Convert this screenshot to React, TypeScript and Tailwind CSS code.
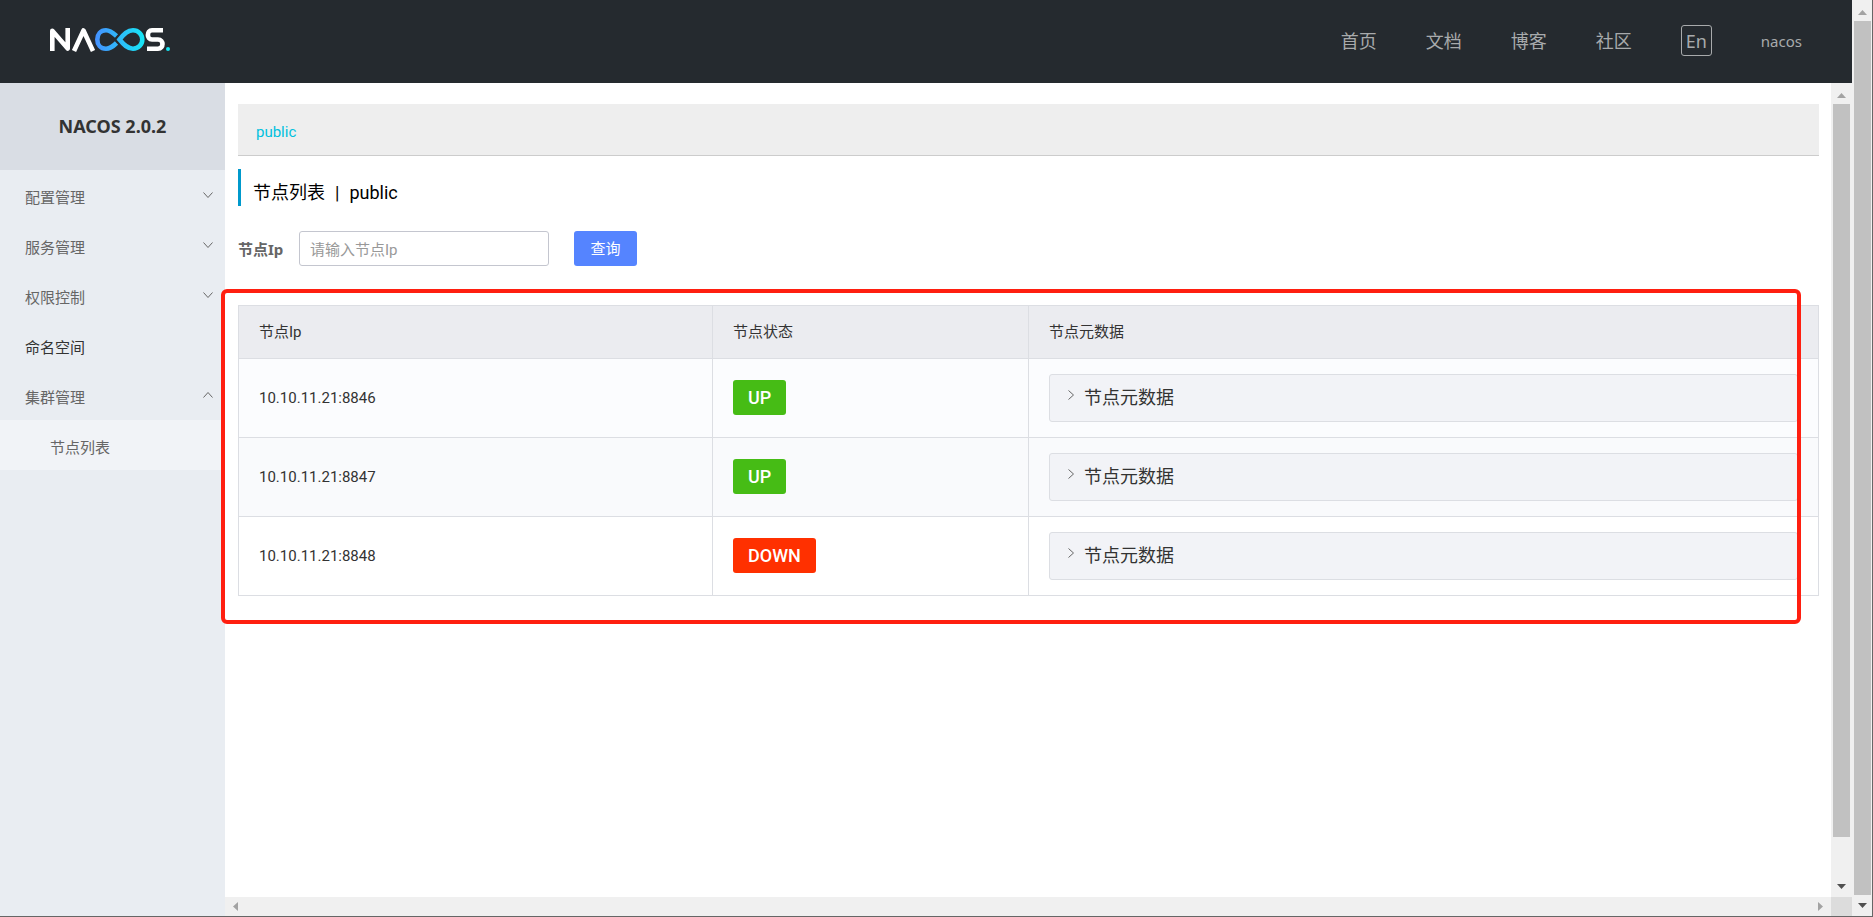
import React, { useState } from 'react';

type NodeState = 'UP' | 'DOWN';

interface ClusterNode {
  address: string;
  state: NodeState;
  rowClass: string;
}

const nodes: ClusterNode[] = [
  { address: '10.10.11.21:8846', state: 'UP', rowClass: 'bg-[#fbfcfe]' },
  { address: '10.10.11.21:8847', state: 'UP', rowClass: 'bg-[#f9fafc]' },
  { address: '10.10.11.21:8848', state: 'DOWN', rowClass: 'bg-white' },
];

const navLinks = ['首页', '文档', '博客', '社区'];

const menu = [
  { label: '配置管理', children: [] as string[], leaf: false },
  { label: '服务管理', children: [], leaf: false },
  { label: '权限控制', children: [], leaf: false },
  { label: '命名空间', children: [], leaf: true },
  { label: '集群管理', children: ['节点列表'], leaf: false },
];

function Logo() {
  return (
    <svg width="120" height="24" viewBox="0 0 120 24" fill="none" aria-label="NACOS">
      <defs>
        <linearGradient id="loop" gradientUnits="userSpaceOnUse" x1="45" y1="0" x2="94" y2="0">
          <stop offset="0" stopColor="#4590ff" />
          <stop offset="1" stopColor="#17e6f5" />
        </linearGradient>
      </defs>
      <g stroke="#fff" strokeWidth="4.6" strokeLinejoin="round">
        <path d="M2.300 23V2.800L17.700 20.500V0" />
        <path d="M24 23L33.500 2.500L43 23" />
        <path d="M113 2.300H102C96.500 2.300 96.500 11.500 102 11.500H108C114 11.500 114 20.700 108 20.700H97" />
      </g>
      <g stroke="url(#loop)" strokeWidth="4.6">
        <path d="M66.500 8C62 4 59.500 2.300 56 2.300C50.500 2.300 47.300 6.500 47.300 11.500C47.300 16.500 50.500 20.700 56 20.700C60 20.700 62.500 19 66.500 15" />
        <path d="M69.500 11.500C74 6 77.500 2.300 83 2.300C88.500 2.300 92.300 6.500 92.300 11.500C92.300 16.500 88.500 20.700 83 20.700C77.500 20.700 74 17 69.500 11.500Z" />
      </g>
      <circle cx="118" cy="21" r="2" fill="#17e6f5" />
    </svg>
  );
}

function Chevron({ className = '' }: { className?: string }) {
  return (
    <svg className={className} width="10" height="6" viewBox="0 0 10 6" fill="none" stroke="currentColor">
      <path d="M0.500 0.500L5 5.500L9.500 0.500" />
    </svg>
  );
}

function Triangle({ className = '' }: { className?: string }) {
  return (
    <svg className={className} width="9" height="5" viewBox="0 0 9 5" fill="currentColor">
      <path d="M0 5L4.500 0L9 5Z" />
    </svg>
  );
}

function Header() {
  return (
    <header className="flex h-[83px] shrink-0 items-center justify-between bg-[#252a2f] px-[50px] font-['Noto_Sans','Noto_Sans_CJK_SC',sans-serif] text-[#a8aaac]">
      <a href="#home" className="-mt-1">
        <Logo />
      </a>
      <nav className="flex items-center gap-[49px] pb-0.5 text-lg">
        {navLinks.map((label) => (
          <a key={label} href="#nav">
            {label}
          </a>
        ))}
        <button className="h-[31px] w-[31px] rounded-[3px] border border-[#a8aaac] text-lg leading-6">En</button>
        <a href="#user" className="pt-0.5 text-[15px]">
          nacos
        </a>
      </nav>
    </header>
  );
}

function Sidebar() {
  return (
    <aside className="w-[225px] shrink-0 bg-[#e9edf2] text-[15px] text-[#666]">
      <h1 className="flex h-[87px] items-center justify-center bg-[#d9dde4] pb-0.5 font-['Noto_Sans',sans-serif] text-lg font-bold text-[#333]">
        NACOS 2.0.2
      </h1>
      <ul>
        {menu.map((item) => (
          <li key={item.label}>
            <button
              className={`flex h-[50px] w-full items-center justify-between pr-3 pl-[25px] ${item.leaf ? 'text-[#333]' : ''}`}
            >
              <span className="pt-1.5">{item.label}</span>
              {!item.leaf && <Chevron className={item.children.length > 0 ? 'rotate-180' : ''} />}
            </button>
            {item.children.map((child) => (
              <a key={child} href="#nodes" className="flex h-[50px] items-center bg-[#f1f3f7] pt-1.5 pl-[50px]">
                {child}
              </a>
            ))}
          </li>
        ))}
      </ul>
    </aside>
  );
}

function NodeTable() {
  return (
    <div className="relative mt-[39px]">
      <table className="w-full table-fixed border-collapse text-left text-[15px] text-[#333]">
        <thead>
          <tr className="h-[53px] bg-[#ebecf0]">
            <th className="w-[30%] border border-[#dcdee3] px-5 font-normal">节点Ip</th>
            <th className="w-[20%] border border-[#dcdee3] px-5 font-normal">节点状态</th>
            <th className="border border-[#dcdee3] px-5 font-normal">节点元数据</th>
          </tr>
        </thead>
        <tbody>
          {nodes.map((node) => (
            <tr key={node.address} className={`h-[79px] ${node.rowClass}`}>
              <td className="border border-[#dcdee3] px-5">{node.address}</td>
              <td className="border border-[#dcdee3] px-5 pb-0.5">
                <span
                  className={`inline-block h-[35px] rounded-[3px] px-[15px] align-middle text-lg leading-[35px] font-medium text-white ${
                    node.state === 'UP' ? 'bg-[#46bc15]' : 'bg-[#ff3000]'
                  }`}
                >
                  {node.state}
                </span>
              </td>
              <td className="border border-[#dcdee3] px-5">
                <button className="flex h-12 w-full items-center gap-2 rounded-[3px] border border-[#dcdee3] bg-[#f2f3f7] pl-4 text-lg">
                  <Chevron className="mb-1.5 -rotate-90 text-[#666]" />
                  节点元数据
                </button>
              </td>
            </tr>
          ))}
        </tbody>
      </table>
      {/* highlight frame around the node list */}
      <div className="pointer-events-none absolute -top-4 right-[18px] -bottom-7 -left-[17px] z-10 rounded-md border-4 border-[#ff1f10]" />
    </div>
  );
}

function Content() {
  const [ip, setIp] = useState('');

  return (
    <main className="min-w-0 flex-1 bg-white pt-[21px] pr-3 pl-[13px]">
      <div className="flex h-[52px] items-center border-b border-[#ccc] bg-[#eee] pt-1.5 pl-[18px] text-[15px]">
        <a href="#public" className="text-[#00c1de]">
          public
        </a>
      </div>
      <h2 className="mt-[13px] flex h-[37px] items-center gap-2.5 border-l-[3px] border-[#09c] pt-2.5 pl-3 text-lg text-black">
        <span>节点列表</span>
        <span>|</span>
        <span>public</span>
      </h2>
      <form className="mt-[25px] flex items-center text-[15px]" onSubmit={(e) => e.preventDefault()}>
        <label htmlFor="node-ip" className="w-[61px] pt-0.5 font-['Noto_Sans','Noto_Sans_CJK_SC',sans-serif] font-bold text-[#666]">
          节点Ip
        </label>
        <input
          id="node-ip"
          value={ip}
          onChange={(e) => setIp(e.target.value)}
          placeholder="请输入节点Ip"
          className="h-[35px] w-[250px] rounded-[3px] border border-[#c4c6cf] px-2.5 pt-0.5 placeholder:text-[#999]"
        />
        <button className="ml-[25px] h-[35px] w-[63px] rounded-[3px] bg-[#5584ff] pt-0.5 text-white">查询</button>
      </form>
      <NodeTable />
    </main>
  );
}

export default function App() {
  return (
    <div className="flex h-screen border-r border-b border-[#666] font-['Roboto','Noto_Sans_CJK_SC',sans-serif]">
      <div className="flex min-w-0 flex-1 flex-col">
        <Header />
        <div className="flex min-h-0 flex-1">
          <Sidebar />
          <div className="flex min-w-0 flex-1 flex-col">
            <div className="flex min-h-0 flex-1">
              <Content />
              <div className="flex w-[21px] flex-col items-center bg-[#f0f0f0]">
                <div className="flex h-[21px] shrink-0 items-center pt-1 text-[#a3a3a3]">
                  <Triangle />
                </div>
                <div className="min-h-0 flex-1">
                  <div className="h-[95%] w-[17px] bg-[#c1c1c1]" />
                </div>
                <div className="flex h-[21px] shrink-0 items-center text-[#505050]">
                  <Triangle className="rotate-180" />
                </div>
              </div>
            </div>
            <div className="flex h-[19px] shrink-0 bg-[#f0f0f0]">
              <div className="flex flex-1 items-center justify-between px-1.5 text-[#a3a3a3]">
                <Triangle className="-rotate-90" />
                <Triangle className="rotate-90" />
              </div>
              <div className="w-[21px] bg-[#dcdcdc]" />
            </div>
          </div>
        </div>
      </div>
      <div className="flex w-5 shrink-0 flex-col items-center bg-[#f0f0f0]">
        <div className="flex h-[21px] items-center pt-1 text-[#a3a3a3]">
          <Triangle />
        </div>
        <div className="w-[17px] flex-1 bg-[#c1c1c1]" />
        <div className="flex h-[21px] items-center text-[#505050]">
          <Triangle className="rotate-180" />
        </div>
      </div>
    </div>
  );
}
